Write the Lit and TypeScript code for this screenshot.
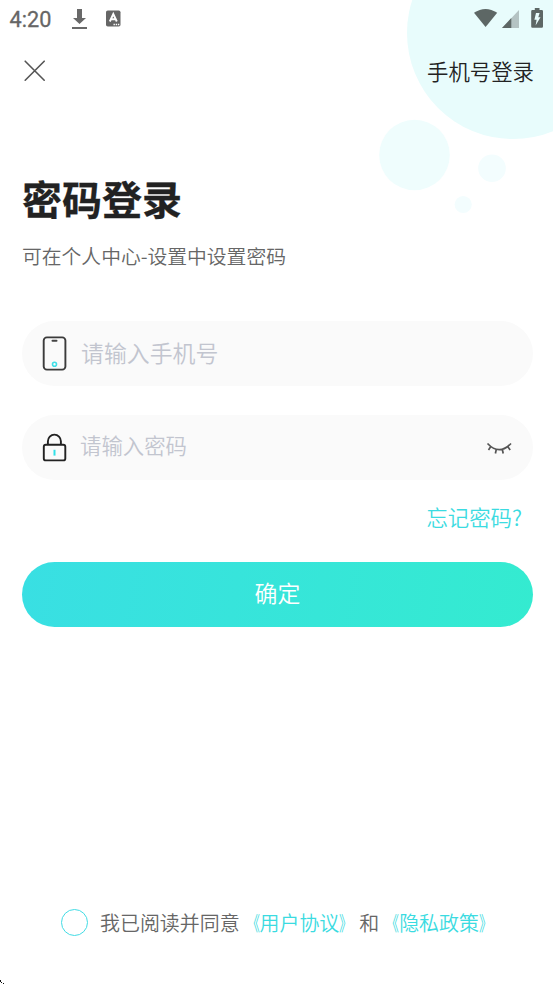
import { LitElement, html, css } from "lit";
import { customElement } from "lit/decorators.js";

@customElement("app-root")
export class AppRoot extends LitElement {
  static styles = css`
    :host {
      display: flex;
      flex-direction: column;
      position: relative;
      width: 100%;
      height: 984px;
      overflow: hidden;
      background: #fff;
      color: #222;
      font-family: "Noto Sans CJK SC", "Noto Sans", sans-serif;
      font-weight: 350;
    }
    * { box-sizing: border-box; }
    svg { display: block; flex: none; }
    .bubbles { position: absolute; top: 0; right: 0; }
    .status, .nav, .title, .sub, .field, .forgot, .submit, .agree { position: relative; white-space: nowrap; }
    .status {
      height: 38px;
      display: flex;
      align-items: center;
      justify-content: space-between;
      padding: 0 9px;
    }
    .left { display: flex; align-items: center; }
    .time { font: 400 21.7px/36px Roboto, sans-serif; -webkit-text-stroke: 0.3px #666; color: #666; width: 62px; padding: 2px 0 0 0.5px; }
    .nav {
      height: 66px;
      display: flex;
      align-items: center;
      justify-content: space-between;
      padding: 0 19px 0 24px;
    }
    .phone-login { font-size: 21.4px; line-height: 32px; }
    .title { margin: 64px 0 0 22px; font-size: 40px; line-height: 60px; font-weight: 700; -webkit-text-stroke: 0.3px #222; }
    .sub { margin: 13px 0 0 22px; font-size: 19.8px; line-height: 30px; color: #666; }
    .field {
      height: 65px;
      margin: 0 20px 0 22px;
      padding: 0 20px;
      border-radius: 33px;
      background: #fafafa;
      display: flex;
      align-items: center;
      color: #c2c5cf;
    }
    .phone { margin-top: 50px; font-size: 22.9px; }
    .phone svg { margin-bottom: 2px; }
    .password { margin-top: 29px; padding-right: 21px; font-size: 21.4px; }
    .hint { flex: 1; margin-left: 14px; line-height: 34px; }
    .phone .hint { padding-bottom: 3px; }
    .password .hint { margin-left: 13px; padding-bottom: 5px; }
    .forgot { margin: 21px 31px 0; text-align: right; font-size: 21.4px; line-height: 32px; color: #3bdbe1; }
    .submit {
      height: 65px;
      margin: 29px 20px 0 22px;
      border-radius: 33px;
      background: linear-gradient(100deg, #39dfe3, #34ebd0);
      color: #fff;
      font-size: 22.9px;
      line-height: 61px;
      text-align: center;
    }
    .agree { margin: auto 0 46px 61px; display: flex; align-items: center; font-size: 19.95px; line-height: 30px; color: #666; }
    .radio { width: 27px; height: 27px; border: 1.5px solid #42dce5; border-radius: 50%; margin: 0 12px 1px 0; }
    .link { color: #3bdbe1; }
    .open, .close { display: inline-block; transform: scaleX(0.66); }
    .open { transform-origin: 100% 50%; }
    .close { transform-origin: 0 50%; }
    .cursor { position: absolute; left: 0; bottom: 0; }
  `;

  private link(name: string) {
    return html`<span class="link"><span class="open">《</span>${name}<span class="close">》</span></span>`;
  }

  render() {
    return html`
      <svg class="bubbles" width="183" height="220" viewBox="370 0 183 220">
        <circle cx="513" cy="33" r="106" fill="#e8fcfc" />
        <circle cx="414.5" cy="155" r="35.3" fill="#effdfd" />
        <circle cx="492" cy="168.3" r="13.8" fill="#f3fdfe" />
        <circle cx="463.2" cy="204.5" r="8.6" fill="#f3fdfe" />
      </svg>
      <div class="status">
        <div class="left">
          <span class="time">4:20</span>
          <svg width="56" height="38" viewBox="71 0 56 38">
            <path d="M77 9h5v9h4l-6.5 6-6.5-6h4z" fill="#696969" />
            <path d="M72 27h15v2H72z" fill="#696969" />
            <rect x="106" y="10.5" width="14.5" height="16" rx="1.8" fill="#666" />
            <path d="M109.8 21.5l3.5-7.5 3.5 7.5M111 19.2h4.6" fill="none" stroke="#fff" stroke-width="1.9" />
            <path d="M113.5 24.5h1.4m.8 0h1.4m.8 0h1.4" stroke="#fff" stroke-width="1.3" />
          </svg>
        </div>
        <svg width="73" height="38" viewBox="471 0 73 38">
          <path d="M474 12.8Q485.5 5 497.2 12.8L485.6 27z" fill="#5d6765" />
          <path d="M519 10v18h-17z" fill="#b4c3c3" />
          <path d="M511.3 18v10H502z" fill="#5d6765" />
          <path d="M534.8 8h4.7v2h2.3q1.2 0 1.2 1.2v15.4q0 1.2-1.2 1.2h-9.4q-1.2 0-1.2-1.2V11.2q0-1.2 1.2-1.2h2.4z" fill="#5d6765" />
          <path d="M536 13h3.6l-1.3 4.2h2.2l-4.9 8.3 1-5.7h-2.2z" fill="#e8fcfc" />
        </svg>
      </div>
      <div class="nav">
        <svg width="22" height="22" viewBox="0 0 22 22">
          <path d="M1.2 1.2l19 19M20.2 1.2l-19 19" stroke="#555" stroke-width="1.6" stroke-linecap="round" />
        </svg>
        <span class="phone-login">手机号登录</span>
      </div>
      <div class="title">密码登录</div>
      <div class="sub">可在个人中心-设置中设置密码</div>
      <div class="field phone">
        <svg width="25" height="36" viewBox="42 335 25 36">
          <rect x="43.7" y="337.4" width="21.7" height="32.2" rx="3.2" fill="none" stroke="#3b3b3b" stroke-width="1.9" />
          <path d="M52.5 340.7h4" stroke="#444" stroke-width="2" stroke-linecap="round" />
          <circle cx="54.5" cy="364.3" r="2" fill="none" stroke="#40dfe7" stroke-width="1.6" />
        </svg>
        <span class="hint">请输入手机号</span>
      </div>
      <div class="field password">
        <svg width="25" height="30" viewBox="42 433 25 30">
          <rect x="43.8" y="444.8" width="21.5" height="15.6" rx="2" fill="none" stroke="#222" stroke-width="1.9" />
          <path d="M47.9 444v-2.7a6.5 6.7 0 0 1 13 0v2.7" fill="none" stroke="#222" stroke-width="1.9" />
          <path d="M54.5 449.8v5.8" stroke="#31e0e8" stroke-width="2" />
        </svg>
        <span class="hint">请输入密码</span>
        <svg width="26" height="14" viewBox="486 440 26 14">
          <path d="M487.5 442.5Q499.2 454.8 511 442.5M490.5 446l-2 3M496.2 448.8l-.8 3.7M502.4 448.8l.8 3.7M508 446l2.2 3" fill="none" stroke="#555" stroke-width="1.7" />
        </svg>
      </div>
      <div class="forgot">忘记密码?</div>
      <div class="submit">确定</div>
      <div class="agree">
        <span class="radio"></span>
        <span>我已阅读并同意${this.link("用户协议")}和${this.link("隐私政策")}</span>
      </div>
      <svg class="cursor" width="5" height="5" viewBox="0 0 5 5">
        <path d="M0 1h1v2H0zM1 3h1v1H1zM3 4h1v1H3z" fill="#111" />
      </svg>
    `;
  }
}
